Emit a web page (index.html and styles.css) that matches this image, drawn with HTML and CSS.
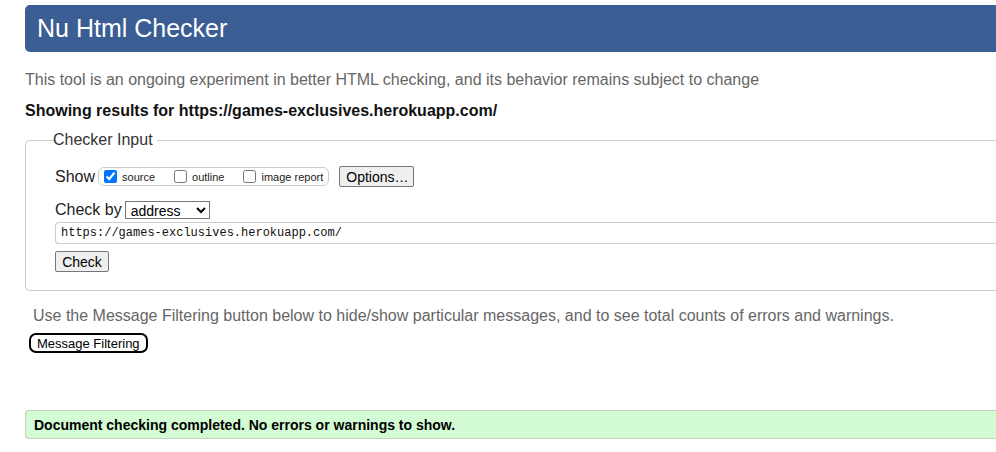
FILE: index.html
```html
<!DOCTYPE html>
<html>
<head>
<meta charset="utf-8">
<title>Nu Html Checker</title>
<link rel="stylesheet" href="styles.css">
</head>
<body>
<div class="page">
  <h1 class="banner">Nu Html Checker</h1>
  <p class="intro">This tool is an ongoing experiment in better HTML checking, and its behavior remains subject to change</p>
  <p class="showing">Showing results for https://games-exclusives.herokuapp.com/</p>
  <fieldset class="checker">
    <legend>Checker Input</legend>
    <div class="row show-row">
      <span class="lbl">Show</span>
      <span class="opts">
        <label class="opt"><input type="checkbox" checked> source</label>
        <label class="opt"><input type="checkbox"> outline</label>
        <label class="opt"><input type="checkbox"> image report</label>
      </span>
      <button class="btn options">Options…</button>
    </div>
    <div class="row by-row">
      <span class="lbl">Check by</span>
      <select class="sel"><option>address</option></select>
    </div>
    <input class="url" type="text" value="https://games-exclusives.herokuapp.com/">
    <button class="btn check">Check</button>
  </fieldset>
  <p class="filter-note">Use the Message Filtering button below to hide/show particular messages, and to see total counts of errors and warnings.</p>
  <button class="filter-btn">Message Filtering</button>
  <div class="success">Document checking completed. No errors or warnings to show.</div>
</div>
</body>
</html>
```
FILE: styles.css
```css
html { overflow: hidden; }
body {
  margin: 0;
  background: #fff;
  font-family: "Liberation Sans", Arial, sans-serif;
  color: #000;
}
.page {
  width: 1100px;
  padding: 5px 0 0 25px;
}
.banner {
  margin: 0;
  height: 47px;
  box-sizing: border-box;
  padding: 9px 0 0 12px;
  background: #3a5d93;
  color: #fff;
  font-weight: normal;
  font-size: 25px;
  line-height: 28px;
  border-radius: 5px 0 0 5px;
}
.intro {
  margin: 19px 0 0;
  font-size: 16px;
  line-height: 18px;
  color: #666;
}
.showing {
  margin: 13px 0 0;
  font-size: 16px;
  line-height: 18px;
  font-weight: bold;
  color: #111;
}
.checker {
  margin: 11px 0 0;
  padding: 17px 0 18px 29px;
  border: 1px solid #ccc;
  border-right: none;
  border-radius: 5px 0 0 5px;
  min-width: 0;
}
.checker legend {
  padding: 0 1px;
  position: relative;
  left: -3px;
  font-size: 16px;
  color: #333;
}
.row {
  display: flex;
  align-items: center;
}
.lbl {
  font-size: 16px;
  color: #222;
}
.show-row { height: 21px; }
.opts {
  display: flex;
  align-items: center;
  margin-left: 3px;
  height: 17px;
  padding: 0 5px 0 5px;
  border: 1px solid #ccc;
  border-radius: 6px;
}
.opt {
  display: flex;
  align-items: center;
  font-size: 11px;
  color: #222;
  margin-right: 19px;
}
.opt:last-child { margin-right: 0; }
.opt input {
  margin: 0 5px 0 0;
  width: 13px;
  height: 13px;
}
.btn {
  font-family: "Liberation Sans", Arial, sans-serif;
  font-size: 13px;
  color: #000;
  background: #efefef;
  border: 1px solid #767676;
  border-radius: 2px;
  padding: 0 6px;
}
.options {
  margin-left: 10px;
  height: 21px;
  width: 75px;
  font-size: 14px;
}
.by-row {
  margin-top: 13px;
  height: 20px;
}
.sel {
  margin-left: 3px;
  width: 85px;
  height: 18px;
  font-family: "Liberation Sans", Arial, sans-serif;
  font-size: 14px;
  padding: 0 0 0 1px;
  border: 1px solid #767676;
  border-radius: 0;
  background: #fff;
  color: #000;
}
.url {
  display: block;
  box-sizing: border-box;
  margin-top: 2px;
  width: 100%;
  height: 22px;
  padding: 0 5px;
  border: 1px solid #ccc;
  border-right: none;
  border-radius: 4px 0 0 4px;
  font-family: "Liberation Mono", "DejaVu Sans Mono", monospace;
  font-size: 12px;
  color: #111;
}
.check {
  display: block;
  margin-top: 7px;
  height: 21px;
  width: 54px;
  font-size: 14px;
}
.filter-note {
  margin: 16px 0 0 8px;
  font-size: 16px;
  line-height: 18px;
  color: #666;
}
.filter-btn {
  display: block;
  margin: 8px 0 0 4px;
  height: 20px;
  padding: 0 6px;
  font-family: "Liberation Sans", Arial, sans-serif;
  font-size: 13px;
  color: #000;
  background: #fff;
  border: 2px solid #000;
  border-radius: 7px;
}
.success {
  margin-top: 57px;
  height: 29px;
  box-sizing: border-box;
  padding: 6px 0 0 8px;
  background: #d4fcd4;
  border: 1px solid #bfd3bf;
  border-right: none;
  border-radius: 4px 0 0 4px;
  font-size: 14px;
  font-weight: bold;
  color: #000;
}
```
